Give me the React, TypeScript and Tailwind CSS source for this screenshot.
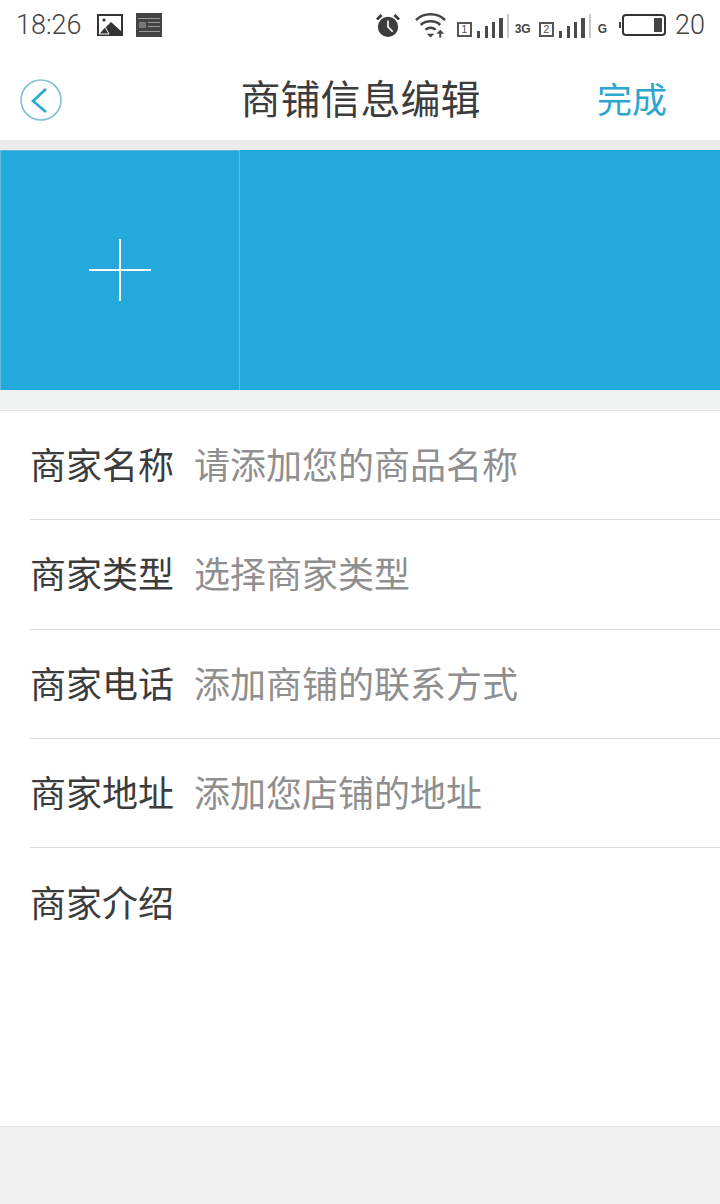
import React from 'react';

const FONT = "font-['Noto_Sans_CJK_SC','Noto_Sans',sans-serif]";

const rows = [
  { label: '商家名称', hint: '请添加您的商品名称' },
  { label: '商家类型', hint: '选择商家类型' },
  { label: '商家电话', hint: '添加商铺的联系方式' },
  { label: '商家地址', hint: '添加您店铺的地址' },
];

function Bars() {
  return (
    <svg width="32" height="24" viewBox="0 0 32 24" fill="#4a4a4a">
      <rect x="0" y="17" width="3" height="7" />
      <rect x="8" y="12" width="3" height="12" />
      <rect x="15" y="8" width="3" height="16" />
      <rect x="22" y="4" width="4" height="20" />
      <rect x="30" y="0" width="2" height="24" fill="#c8c8c8" />
    </svg>
  );
}

function SimBox({ n }: { n: string }) {
  return (
    <span className="flex h-[15px] w-[15px] items-center justify-center border-2 border-[#555] font-['Liberation_Sans',sans-serif] text-[11px] leading-none text-[#555]">
      {n}
    </span>
  );
}

function StatusBar() {
  return (
    <div className="flex h-[50px] items-center bg-white pl-[16px] pr-[15px]">
      <span className="font-['Roboto',sans-serif] text-[27px] leading-none font-light text-[#444]">18:26</span>
      <svg className="ml-[15px]" width="26" height="22" viewBox="0 0 26 22">
        <rect width="26" height="22" fill="#333" />
        <rect x="2" y="2" width="22" height="18" fill="#fff" />
        <path d="M2 20 L14 8 L24 17 V20 Z" fill="#333" />
        <path d="M2 20 L8 13 L12 20 Z" fill="#333" stroke="#fff" strokeWidth="1" />
        <circle cx="7" cy="6" r="1.6" fill="#333" />
      </svg>
      <svg className="ml-[13px]" width="26" height="24" viewBox="0 0 26 24">
        <rect width="26" height="24" fill="#444" />
        <rect x="2" y="5" width="22" height="1" fill="#999" />
        <rect x="3" y="9" width="7" height="6" fill="#777" />
        <rect x="12" y="9" width="12" height="1" fill="#999" />
        <rect x="12" y="13" width="12" height="1" fill="#999" />
        <rect x="3" y="18" width="21" height="1" fill="#999" />
      </svg>
      <div className="ml-auto flex items-center">
        <svg className="mt-[1px]" width="24" height="24" viewBox="0 0 26 26">
          <circle cx="13" cy="14" r="11" fill="#3d3d3d" />
          <path d="M13 7 V14 L18 19" fill="none" stroke="#fff" strokeWidth="1.8" />
          <path d="M1 6 L6 1 M25 6 L20 1" stroke="#3d3d3d" strokeWidth="3" />
        </svg>
        <svg className="ml-[15px]" width="33" height="28" viewBox="0 0 34 28" fill="none" stroke="#444" strokeWidth="2.6">
          <path d="M1 9 C9 1 23 1 31 9" />
          <path d="M6 14 C11 9 21 9 26 14" />
          <path d="M11 19 C13 16 19 16 21 19" />
          <path d="M12 23 H20 L16 27 Z" fill="#444" stroke="none" />
          <path d="M26 27 V22" strokeWidth="2" />
          <path d="M22 23 H30 L26 19 Z" fill="#444" stroke="none" />
        </svg>
        <div className="ml-[9px] mt-[1px] flex items-end gap-[5px]">
          <span className="mb-[1px]"><SimBox n="1" /></span>
          <Bars />
        </div>
        <span className="ml-[6px] mt-[8px] font-['Liberation_Sans',sans-serif] text-[12px] leading-none font-bold text-[#444]">3G</span>
        <div className="ml-[8px] mt-[1px] flex items-end gap-[5px]">
          <span className="mb-[1px]"><SimBox n="2" /></span>
          <Bars />
        </div>
        <span className="ml-[7px] mt-[8px] font-['Liberation_Sans',sans-serif] text-[12px] leading-none font-bold text-[#444]">G</span>
        <svg className="ml-[12px]" width="47" height="24" viewBox="0 0 47 24" fill="none">
          <rect x="0" y="9" width="2" height="6" fill="#444" />
          <rect x="4" y="2" width="42" height="20" rx="3" stroke="#333" strokeWidth="2" />
          <rect x="35" y="5" width="8" height="14" fill="#444" />
        </svg>
        <span className="ml-[9px] font-['Roboto',sans-serif] text-[27px] leading-none font-light text-[#444]">20</span>
      </div>
    </div>
  );
}

function NavBar() {
  return (
    <div className="grid h-[90px] grid-cols-[1fr_auto_1fr] items-center bg-white px-[20px]">
      <svg className="mt-[10px]" width="42" height="42" viewBox="0 0 42 42" fill="none">
        <circle cx="21" cy="21" r="20" stroke="#7cc0d6" strokeWidth="1.6" />
        <path d="M26 10 L13 22 L26 33" stroke="#2aa6cf" strokeWidth="2.6" />
      </svg>
      <div className="ml-[1px] mt-[4px] text-[40px] leading-none text-[#3c3c3c]">商铺信息编辑</div>
      <div className="mr-[33px] mt-[4px] text-right text-[35px] leading-none text-[#2aa6cf]">完成</div>
    </div>
  );
}

function Banner() {
  return (
    <div className="flex h-[240px] bg-[#23a9dc]">
      <div className="flex w-[240px] items-center justify-center border-x border-t border-[#5dbbe0]">
        <svg className="mt-[-1px]" width="64" height="64" viewBox="0 0 64 64" stroke="#fff" strokeWidth="2">
          <path d="M1 32 H63 M32 1 V63" />
        </svg>
      </div>
    </div>
  );
}

export default function App() {
  return (
    <div className={`${FONT} flex h-[1204px] w-[720px] flex-col overflow-hidden bg-[#f1f1f1]`}>
      <StatusBar />
      <NavBar />
      <div className="h-[10px] bg-[#ececec]" />
      <Banner />
      <div className="h-[20px] bg-[#f1f2f2]" />
      <div className="h-[717px] border-y border-[#e2e2e2] bg-white pl-[30px]">
        {rows.map((row) => (
          <div key={row.label} className="flex h-[109.25px] items-center border-b border-[#dcdcdc] pb-[4px] text-[36px] leading-none">
            <span className="text-[#3c3c3c]">{row.label}</span>
            <span className="ml-[20px] text-[#8f8f8f]">{row.hint}</span>
          </div>
        ))}
        <div className="flex h-[109px] items-center pb-[4px] text-[36px] leading-none text-[#3c3c3c]">商家介绍</div>
      </div>
    </div>
  );
}
